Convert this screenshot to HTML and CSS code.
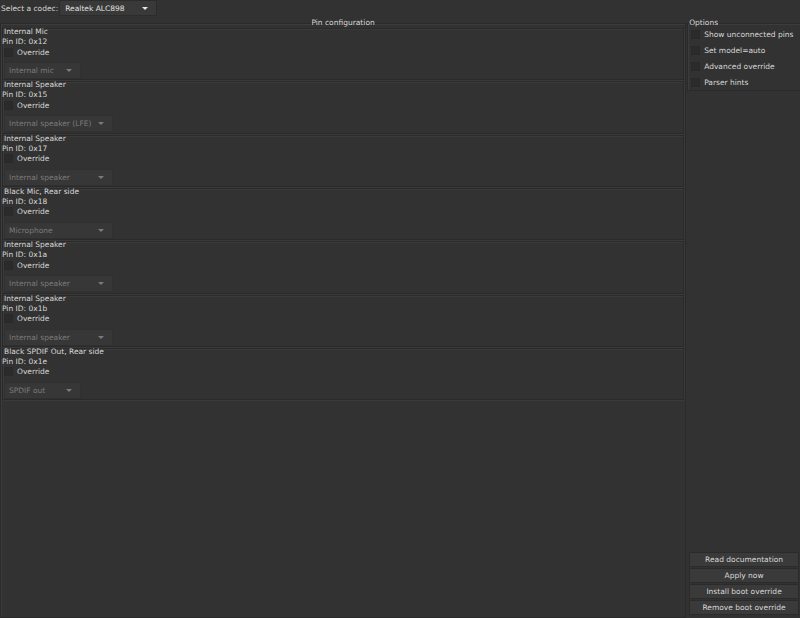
FILE: index.html
```html
<!DOCTYPE html>
<html>
<head>
<meta charset="utf-8">
<link rel="stylesheet" href="styles.css">
</head>
<body>
<div class="top">
  <span class="lbl">Select a codec:</span>
  <div class="combo codec"><span>Realtek ALC898</span><span class="arrow"></span></div>
</div>
<div class="main">
  <section class="pinconf">
    <div class="ftitle center">Pin configuration</div>
    <div class="fbody">
      <div class="group">
        <div class="gtitle">Internal Mic</div>
        <div class="pinid">Pin ID: 0x12</div>
        <div class="check"><span class="box"></span><span>Override</span></div>
        <div class="combo dis w76"><span>Internal mic</span><span class="arrow"></span></div>
      </div>
      <div class="group">
        <div class="gtitle">Internal Speaker</div>
        <div class="pinid">Pin ID: 0x15</div>
        <div class="check"><span class="box"></span><span>Override</span></div>
        <div class="combo dis w108"><span>Internal speaker (LFE)</span><span class="arrow"></span></div>
      </div>
      <div class="group">
        <div class="gtitle">Internal Speaker</div>
        <div class="pinid">Pin ID: 0x17</div>
        <div class="check"><span class="box"></span><span>Override</span></div>
        <div class="combo dis w108"><span>Internal speaker</span><span class="arrow"></span></div>
      </div>
      <div class="group">
        <div class="gtitle">Black Mic, Rear side</div>
        <div class="pinid">Pin ID: 0x18</div>
        <div class="check"><span class="box"></span><span>Override</span></div>
        <div class="combo dis w108"><span>Microphone</span><span class="arrow"></span></div>
      </div>
      <div class="group">
        <div class="gtitle">Internal Speaker</div>
        <div class="pinid">Pin ID: 0x1a</div>
        <div class="check"><span class="box"></span><span>Override</span></div>
        <div class="combo dis w108"><span>Internal speaker</span><span class="arrow"></span></div>
      </div>
      <div class="group">
        <div class="gtitle">Internal Speaker</div>
        <div class="pinid">Pin ID: 0x1b</div>
        <div class="check"><span class="box"></span><span>Override</span></div>
        <div class="combo dis w108"><span>Internal speaker</span><span class="arrow"></span></div>
      </div>
      <div class="group">
        <div class="gtitle">Black SPDIF Out, Rear side</div>
        <div class="pinid">Pin ID: 0x1e</div>
        <div class="check"><span class="box"></span><span>Override</span></div>
        <div class="combo dis w76"><span>SPDIF out</span><span class="arrow"></span></div>
      </div>
    </div>
  </section>
  <aside class="side">
    <section class="options">
      <div class="ftitle">Options</div>
      <div class="fbody opts">
        <div class="opt"><span class="box"></span><span>Show unconnected pins</span></div>
        <div class="opt"><span class="box"></span><span>Set model=auto</span></div>
        <div class="opt"><span class="box"></span><span>Advanced override</span></div>
        <div class="opt"><span class="box"></span><span>Parser hints</span></div>
      </div>
    </section>
    <div class="spacer"></div>
    <div class="buttons">
      <div class="btn">Read documentation</div>
      <div class="btn">Apply now</div>
      <div class="btn">Install boot override</div>
      <div class="btn">Remove boot override</div>
    </div>
  </aside>
</div>
</body>
</html>
```

FILE: styles.css
```css
html, body {
  margin: 0;
  padding: 0;
  background: #323232;
}
body {
  width: 800px;
  height: 618px;
  overflow: hidden;
  font-family: "DejaVu Sans", sans-serif;
  font-size: 7.5px;
  color: #d8d8d8;
  line-height: 9px;
}
.top {
  height: 18px;
  display: flex;
  align-items: flex-start;
  gap: 1px;
  padding-left: 1px;
  box-sizing: border-box;
}
.top .lbl {
  margin-top: 4px;
}
.combo {
  height: 17px;
  box-sizing: border-box;
  display: flex;
  align-items: center;
  justify-content: space-between;
  padding: 0 8px 0 4px;
  background: #393939;
  border: 1px solid #2c2c2c;
  border-radius: 1px;
}
.codec {
  width: 98px;
  height: 16px;
  color: #e0e0e0;
  padding-left: 5px;
}
.arrow {
  width: 0;
  height: 0;
  border-left: 3px solid transparent;
  border-right: 3px solid transparent;
  border-top: 3px solid #e6e6e6;
}
.combo.dis {
  color: #7b7b7b;
  background: #373737;
  border-color: #303030;
}
.combo.dis .arrow {
  border-top-color: #7b7b7b;
}
.w76 { width: 77px; margin-left: 1px; }
.w108 { width: 109px; margin-left: 1px; }

.main {
  display: flex;
  height: 600px;
}
.pinconf {
  width: 687px;
  display: flex;
  flex-direction: column;
}
.ftitle {
  height: 5px;
  line-height: 9px;
  white-space: nowrap;
  position: relative;
  z-index: 1;
  padding-left: 3px;
}
.ftitle.center {
  text-align: center;
  padding-left: 0;
}
.fbody {
  flex: 1;
  border: 1px solid #2a2a2a;
  box-shadow: inset 1px 1px 0 #3c3c3c;
  display: flex;
  flex-direction: column;
  gap: 1px;
  padding: 4px 0 0 1px;
}
.group {
  width: 682px;
  height: 52.33px;
  flex: none;
  box-sizing: border-box;
  border: 1px solid #2a2a2a;
  box-shadow: inset 1px 1px 0 #3a3a3a, 1px 1px 0 #3a3a3a;
  display: flex;
  flex-direction: column;
}
.gtitle {
  height: 8px;
  line-height: 8px;
  padding-left: 1px;
  margin-top: -1px;
}
.pinid {
  height: 9px;
  margin-left: -1px;
  margin-top: 1px;
}
.check {
  height: 12px;
  display: flex;
  align-items: center;
  gap: 4px;
  padding-left: 1px;
  margin-bottom: 4px;
}
.box {
  width: 9px;
  height: 9px;
  box-sizing: border-box;
  background: #2b2b2b;
  border: 1px solid #292929;
  flex: none;
}
.side {
  width: 113px;
  display: flex;
  flex-direction: column;
  padding-left: 1px;
}
.options {
  display: flex;
  flex-direction: column;
}
.options .ftitle {
  padding-left: 2px;
}
.opts {
  flex: none;
  padding: 2px 0 0 3px;
  gap: 0;
  border-right: none;
}
.opt {
  height: 16px;
  display: flex;
  align-items: center;
  gap: 4px;
}
.spacer {
  flex: 1;
}
.buttons {
  display: flex;
  flex-direction: column;
  gap: 1px;
  padding: 0 1px 3px 2px;
}
.btn {
  height: 15px;
  box-sizing: border-box;
  background: #3a3a3a;
  border: 1px solid #2b2b2b;
  text-align: center;
  line-height: 13px;
  color: #d8d8d8;
}
```
